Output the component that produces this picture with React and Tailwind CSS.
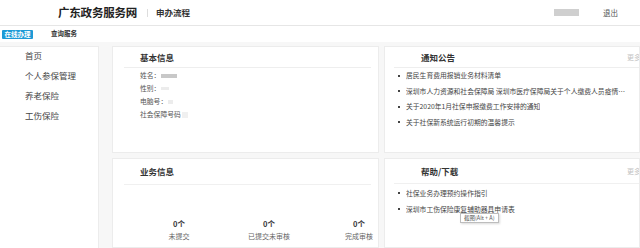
import React from 'react';

const notices = [
    '居民生育费用报销业务材料清单',
    '深圳市人力资源和社会保障局 深圳市医疗保障局关于个人缴费人员疫情期间社会保险费缴纳的通知',
    '关于2020年1月社保申报缴费工作安排的通知',
    '关于社保新系统运行初期的温馨提示',
];

const downloads = ['社保业务办理预约操作指引', '深圳市工伤保险康复辅助器具申请表'];

const menu = ['首页', '个人参保管理', '养老保险', '工伤保险'];

function Bullet({ children }) {
    return (
        <li className="flex items-center gap-[6px] pr-[8px]">
            <span className="w-[2px] h-[2px] bg-[#444] shrink-0" />
            <span className="truncate">{children}</span>
        </li>
    );
}

function Blur({ w, h = 4, tone = 'bg-[#c8c8c8]' }) {
    return <span className={`inline-block ${tone} blur-[0.6px]`} style={{ width: w, height: h }} />;
}

export default function App() {
    return (
        <div
            className="w-[640px] h-[248px] overflow-hidden bg-[#f7f7f7] text-[#444] flex flex-col"
            style={{ fontFamily: '"Noto Sans CJK SC", "Noto Sans", sans-serif' }}
        >
            {/* header */}
            <div className="h-[26px] shrink-0 bg-white border-b border-[#e6e6e6] flex items-center">
                <span className="ml-[58px] text-[11.5px] font-bold text-[#222] tracking-[-0.2px]">广东政务服务网</span>
                <span className="ml-[10px] w-px h-[8px] bg-[#ddd]" />
                <span className="ml-[8px] text-[8.5px] font-bold text-[#333]">申办流程</span>
                <span className="ml-auto w-[25px] h-[7px] bg-[#cfcfcf] blur-[0.5px]" />
                <span className="ml-[24px] mr-[22px] text-[7.5px] text-[#555]">退出</span>
            </div>

            {/* tabs */}
            <div className="h-[16px] shrink-0 bg-white flex items-center">
                <span className="ml-[2px] h-[9px] px-[2px] w-[31px] bg-[#1d9ad6] rounded-[1px] text-white text-[6.5px] leading-[9px] font-bold text-center">
                    在线办理
                </span>
                <span className="ml-[18px] text-[6.5px] font-bold text-[#333]">查询服务</span>
            </div>

            {/* body */}
            <div className="flex-1 flex pt-[4px] min-h-0">
                <aside className="w-[99px] shrink-0 bg-white border-t border-r border-[#ececec]">
                    <ul className="pl-[25px] mt-[-2px] text-[8.5px] text-[#444] leading-[20px]">
                        {menu.map((m) => (
                            <li key={m}>{m}</li>
                        ))}
                    </ul>
                </aside>

                <div className="flex-1 ml-[13px] grid grid-cols-[267px_1fr] grid-rows-[107px_1fr] gap-x-[5px] gap-y-[5px] min-w-0">
                    {/* 基本信息 */}
                    <section className="bg-white border border-[#ececec] overflow-hidden">
                        <div className="mx-[11px] mr-[7px] h-[21px] border-b border-[#eeeeee] flex items-center pl-[16px] text-[8.5px] font-bold text-[#333]">
                            基本信息
                        </div>
                        <ul className="pl-[27px] pt-[1px] text-[6.8px] leading-[13px] text-[#555]">
                            <li className="flex items-center gap-[1px]">
                                姓名：<Blur w={16} h={4} />
                            </li>
                            <li className="flex items-center gap-[1px]">
                                性别：<Blur w={8} h={3} tone="bg-[#ececec]" />
                            </li>
                            <li className="flex items-center gap-[1px]">
                                电脑号：<Blur w={5} h={4} tone="bg-[#ececec]" />
                            </li>
                            <li className="flex items-center gap-[1px]">
                                社会保障号码<Blur w={6} h={6} tone="bg-[#f0f0f0]" />
                            </li>
                        </ul>
                    </section>

                    {/* 通知公告 */}
                    <section className="bg-white border border-[#ececec] overflow-hidden">
                        <div className="ml-[9px] h-[21px] border-b border-[#eeeeee] flex items-center pl-[27px] text-[8.5px] font-bold text-[#333]">
                            通知公告
                            <span className="ml-auto mr-[-2px] text-[7px] font-normal text-[#c4c4c4]">更多</span>
                        </div>
                        <ul className="pl-[13px] text-[6.8px] leading-[15.5px] text-[#444]">
                            {notices.map((n) => (
                                <Bullet key={n}>{n}</Bullet>
                            ))}
                        </ul>
                    </section>

                    {/* 业务信息 */}
                    <section className="bg-white border border-[#ececec] overflow-hidden">
                        <div className="mx-[11px] mr-[7px] h-[26px] border-b border-[#f0f0f0] flex items-center pl-[16px] text-[8.5px] font-bold text-[#333]">
                            业务信息
                        </div>
                        <div className="flex pl-[21px] pt-[33px]">
                            {[
                                ['0个', '未提交'],
                                ['0个', '已提交未审核'],
                                ['0个', '完成审核'],
                            ].map(([n, label]) => (
                                <div key={label} className="w-[90px] shrink-0 flex flex-col items-center">
                                    <span className="text-[7.5px] font-bold text-[#333] leading-[12px]">{n}</span>
                                    <span className="text-[7px] text-[#666] leading-[12px]">{label}</span>
                                </div>
                            ))}
                        </div>
                    </section>

                    {/* 帮助/下载 */}
                    <section className="relative bg-white border border-[#ececec] overflow-hidden">
                        <div className="ml-[9px] h-[25px] border-b border-[#f0f0f0] flex items-center pl-[27px] text-[8.5px] font-bold text-[#333]">
                            帮助/下载
                            <span className="ml-auto mr-[-2px] text-[7px] font-normal text-[#c4c4c4]">更多</span>
                        </div>
                        <ul className="pl-[13px] pt-[1px] text-[6.8px] leading-[16px] text-[#444]">
                            {downloads.map((d) => (
                                <Bullet key={d}>{d}</Bullet>
                            ))}
                        </ul>
                        <div className="absolute left-[75px] top-[54px] h-[10px] px-[3px] bg-white border border-[#bdbdbd] shadow-[1px_1px_2px_rgba(0,0,0,0.15)] text-[5.5px] leading-[8px] text-[#555]">
                            截图(Alt + A)
                        </div>
                    </section>
                </div>
            </div>
        </div>
    );
}
